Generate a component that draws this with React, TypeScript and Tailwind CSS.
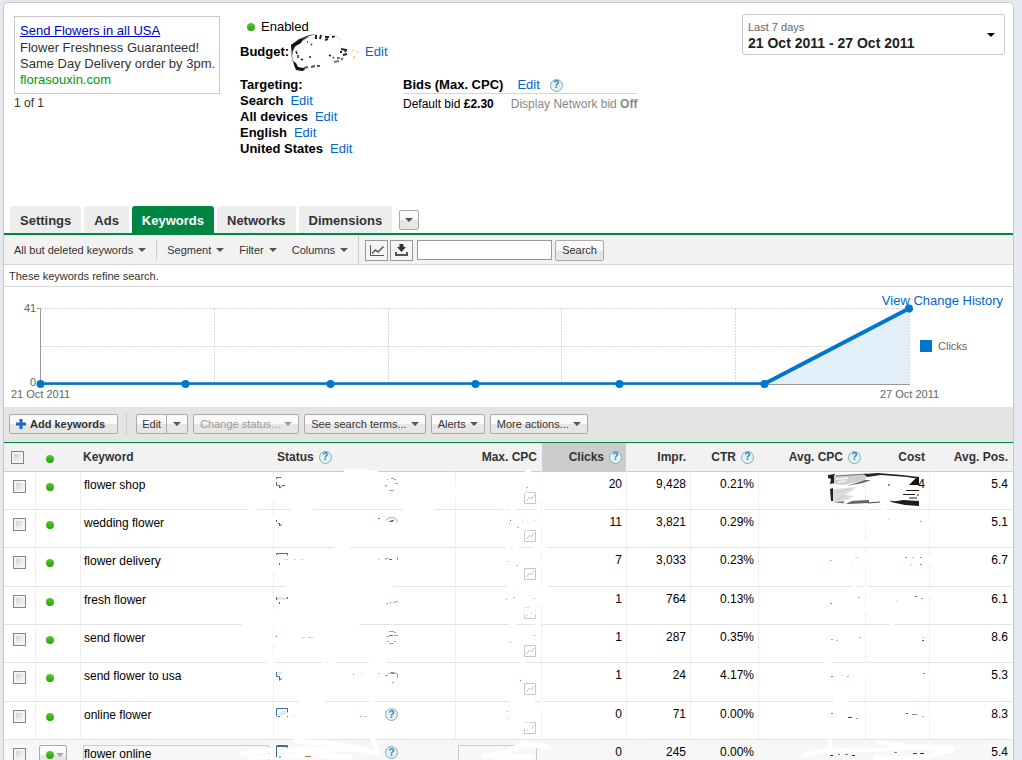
import { ReactNode, useState } from "react";
import { clsx } from "clsx";

type KeywordRow = {
  keyword: string;
  clicks: string;
  impressions: string;
  ctr: string;
  cost?: string;
  position: string;
  showStatus?: boolean;
};

const rows: KeywordRow[] = [
  { keyword: "flower shop", clicks: "20", impressions: "9,428", ctr: "0.21%", cost: "4", position: "5.4" },
  { keyword: "wedding flower", clicks: "11", impressions: "3,821", ctr: "0.29%", position: "5.1" },
  { keyword: "flower delivery", clicks: "7", impressions: "3,033", ctr: "0.23%", position: "6.7" },
  { keyword: "fresh flower", clicks: "1", impressions: "764", ctr: "0.13%", position: "6.1" },
  { keyword: "send flower", clicks: "1", impressions: "287", ctr: "0.35%", position: "8.6" },
  { keyword: "send flower to usa", clicks: "1", impressions: "24", ctr: "4.17%", position: "5.3" },
  { keyword: "online flower", clicks: "0", impressions: "71", ctr: "0.00%", position: "8.3", showStatus: true },
  { keyword: "flower online", clicks: "0", impressions: "245", ctr: "0.00%", position: "5.4", showStatus: true },
];

const tabs = ["Settings", "Ads", "Keywords", "Networks", "Dimensions"];
const targeting = ["Search", "All devices", "English", "United States"];

function Caret({ className = "text-[#555]" }: { className?: string }) {
  return (
    <svg className={clsx("h-1 w-2 shrink-0", className)} viewBox="0 0 8 4" fill="currentColor" aria-hidden="true">
      <path d="M0 0h8L4 4z" />
    </svg>
  );
}

function Help() {
  return (
    <span className="inline-flex size-[13px] shrink-0 items-center justify-center rounded-full border border-[#86adb4] bg-[#dff2f6] text-[10px] leading-none font-bold text-[#3f7cb0]">
      ?
    </span>
  );
}

function Dot() {
  return <span className="block size-2 shrink-0 rounded-full bg-linear-to-b from-[#55c92c] to-[#25a00d]" />;
}

function Checkbox({ label }: { label: string }) {
  return (
    <input
      type="checkbox"
      aria-label={label}
      className="block size-[13px] appearance-none border border-[#858585] bg-linear-to-br from-[#c4c9d1] to-white shadow-[inset_0_0_0_2px_#f4f4f4] checked:from-[#4a78b5]"
    />
  );
}

function EditLink() {
  return <a href="#edit" className="text-[#06c]">Edit</a>;
}

function GrayButton({ children, className, disabled, label }: { children: ReactNode; className?: string; disabled?: boolean; label?: string }) {
  return (
    <button
      type="button"
      disabled={disabled}
      aria-label={label}
      className={clsx(
        "flex h-5 items-center rounded-[2px] border border-[#aaa] bg-linear-to-b from-[#fafafa] from-50% to-[#e6e6e6] to-50% text-[11px]",
        disabled ? "text-[#999]" : "text-[#333]",
        className,
      )}
    >
      {children}
    </button>
  );
}

function BudgetScribble() {
  return (
    <svg className="h-4 w-[76px] overflow-visible" viewBox="289 43 76 16" aria-hidden="true">
      <path d="M318 33l-9 1-10 4-8 6 1 12 1-6 3-6 6-4 5-3 2-2z" fill="#444" />
      <path d="M291 44l9-6h3l-2 4-7 4-2 5z" fill="#151515" />
      <path d="M291 50l2 11" stroke="#999" />
      <path d="M293 60l3 2 2 4 6 1 1 2-3 1-6-1-2-5z" fill="#151515" />
      <path d="M304 67l4-1M311 66l4-1M317 65l3 0" stroke="#555" strokeWidth="2" />
      <path d="M316 34v4M321 34l-1 4M325 36h4M332 36l3-1M328 38l-3 1" stroke="#222" strokeWidth="2" />
      <path d="M330 33l8 3 3 4" stroke="#e2e2e2" fill="none" />
      <path d="M311 43l1 1M307 41h1M298 54v3M296 50l1 3M309 56h2M329 54l2 1M333 56l1 1M301 58l2 1" stroke="#222" strokeWidth="1.500" />
      <path d="M341 48l5 1-1 2M343 54l4-1M340 51h2" stroke="#222" strokeWidth="2" fill="none" />
      <path d="M334 61l5-1M341 59l2-2M337 57h3" stroke="#777" strokeWidth="2" />
      <path d="M352 49l1 1M353 58l2-3" stroke="#eab37c" />
      <path d="M357 50l1 2" stroke="#93bfe8" />
    </svg>
  );
}

function CampaignSummary() {
  return (
    <section className="flex px-[10px] pr-2 pb-[49px] text-[13px] leading-4">
      <div className="w-[226px] shrink-0 pt-[13px] text-[#333]">
        <div className="w-[206px] border border-[#c8c8c8] px-[5px] pt-[6px] pb-[5px] whitespace-nowrap">
          <a href="#ad" className="mb-px block text-[#00c] underline">Send Flowers in all USA</a>
          <p>Flower Freshness Guaranteed!</p>
          <p>Same Day Delivery order by 3pm.</p>
          <p className="text-[#090]">florasouxin.com</p>
        </div>
        <p className="mt-px text-xs">1 of 1</p>
      </div>

      <div className="w-[163px] shrink-0 pt-4 text-black">
        <div className="flex items-center gap-[6px] pl-[7px]">
          <Dot />
          Enabled
        </div>
        <div className="mt-[9px] flex">
          <b>Budget:</b>
          <BudgetScribble />
          <EditLink />
        </div>
        <div className="mt-[17px]">
          <b>Targeting:</b>
          {targeting.map((item) => (
            <div key={item} className="flex gap-[7px] whitespace-nowrap">
              <b>{item}</b>
              <EditLink />
            </div>
          ))}
        </div>
      </div>

      <div className="shrink-0 pt-[74px] text-black">
        <div className="flex items-center border-b border-[#d5d5d5]">
          <b className="mr-[14px]">Bids (Max. CPC)</b>
          <EditLink />
          <span className="ml-[10px] flex"><Help /></span>
        </div>
        <div className="mt-[2px] flex gap-[17px] text-xs leading-4">
          <span>Default bid <b>£2.30</b></span>
          <span className="text-[#888]">Display Network bid <b>Off</b></span>
        </div>
      </div>

      <button
        type="button"
        className="mt-[11px] ml-auto flex h-[41px] w-[263px] items-center justify-between rounded-[3px] border border-[#c8c8c8] px-[5px] pr-[9px] text-left"
      >
        <span>
          <span className="block text-[11px] leading-4 text-[#666]">Last 7 days</span>
          <b className="block text-sm leading-4 text-[#222]">21 Oct 2011 - 27 Oct 2011</b>
        </span>
        <Caret className="text-black" />
      </button>
    </section>
  );
}

function TabBar() {
  const [active, setActive] = useState("Keywords");

  return (
    <nav className="flex items-end gap-[3px] border-b-2 border-[#008542] pl-[6px]">
      {tabs.map((tab) => (
        <button
          key={tab}
          type="button"
          onClick={() => setActive(tab)}
          className={clsx(
            "h-[27px] rounded-t-[3px] px-[10px] pt-[2px] text-[13px] font-bold",
            active === tab ? "bg-[#008542] text-white" : "bg-[#ededed] text-[#333]",
          )}
        >
          {tab}
        </button>
      ))}
      <GrayButton label="More tabs" className="mb-[3px] ml-1 w-5 justify-center">
        <Caret />
      </GrayButton>
    </nav>
  );
}

function MenuButton({ children }: { children: ReactNode }) {
  return (
    <button type="button" className="flex items-center gap-[5px] pt-px whitespace-nowrap text-[#333]">
      {children}
      <Caret />
    </button>
  );
}

function FilterBar() {
  const iconButton = "flex h-[21px] w-[23px] items-center justify-center border border-[#999] bg-[#f5f5f5]";

  return (
    <div className="flex h-[30px] items-center border-b border-[#d8d8d8] bg-[#f2f2f2] pl-[10px] text-[11px]">
      <MenuButton>All but deleted keywords</MenuButton>
      <span className="mx-[10px] h-5 w-px bg-[#ccc]" />
      <div className="flex gap-[15px]">
        <MenuButton>Segment</MenuButton>
        <MenuButton>Filter</MenuButton>
        <MenuButton>Columns</MenuButton>
      </div>
      <span className="mr-[6px] ml-[10px] w-px self-stretch bg-[#ccc]" />
      <div className="flex items-center gap-[2px] pt-px">
        <button type="button" aria-label="Toggle chart" className={iconButton}>
          <svg width="16" height="13" viewBox="0 0 16 13" fill="none" stroke="#555" aria-hidden="true">
            <path d="M1.5 1v10.500H15" />
            <path d="M3 9.500l3.500-3.500 2.500 2L14.500 2.500" strokeWidth="1.500" />
          </svg>
        </button>
        <button type="button" aria-label="Download" className={iconButton}>
          <svg width="15" height="13" viewBox="0 0 15 13" fill="#333" aria-hidden="true">
            <path d="M5.500 0h4v3H12L7.500 8 3 3h2.500z" />
            <path d="M1 8h2v2h9V8h2v4H1z" fill="#555" />
          </svg>
        </button>
        <input type="text" aria-label="Search keywords" className="ml-[2px] h-5 w-[135px] border border-[#999] bg-white px-1" />
        <GrayButton className="ml-px h-[21px] px-[6px]">Search</GrayButton>
      </div>
    </div>
  );
}

const chartPoints = [40, 185, 330, 475, 619, 764];

function ClicksChart() {
  return (
    <div className="relative">
      <svg className="block w-full" viewBox="4 287 1009 120" role="img" aria-label="Clicks per day" fontSize="11" fill="#666">
        <path d="M764 384L909 308.500V384z" fill="#e4f0f9" />
        <path d="M41 308.500H909M41 346.500H835M214.500 309V384M388.500 309V384M561.500 309V384M735.500 309V384M909.500 309V384" stroke="#d8d8d8" strokeDasharray="2 1" />
        <path d="M37 308.500h3.500V384M37 384.500H910" stroke="#999" fill="none" />
        <path d="M40 383.500H764" stroke="#0077cc" strokeWidth="2.500" fill="none" />
        <path d="M764 384L909 308.500" stroke="#0077cc" strokeWidth="4" />
        <text x="24" y="312">41</text>
        <text x="30" y="386">0</text>
        <text x="11" y="398">21 Oct 2011</text>
        <text x="880" y="398">27 Oct 2011</text>
        {chartPoints.map((x) => (
          <circle key={x} cx={x + 0.5} cy="384" r="4" fill="#0077cc" />
        ))}
        <circle cx="909" cy="308.500" r="4" fill="#0077cc" />
        <path d="M920 340h12v12h-12z" fill="#0077cc" />
        <text x="938" y="350">Clicks</text>
      </svg>
      <a href="#history" className="absolute top-[6px] right-[10px] text-[13px] leading-4 text-[#06c]">
        View Change History
      </a>
    </div>
  );
}

function ActionBar() {
  return (
    <div className="flex h-9 items-center gap-[5px] border-b border-[#008542] bg-[#e4e4e4] pb-px pl-[5px]">
      <GrayButton className="gap-1 pr-3 pl-[6px] text-xs font-bold">
        <svg width="10" height="10" viewBox="0 0 10 10" aria-hidden="true">
          <path d="M3.500 0h3v3.500H10v3H6.500V10h-3V6.500H0v-3h3.500z" fill="#1c67c4" />
        </svg>
        Add keywords
      </GrayButton>
      <span className="mx-[3px] h-[22px] w-px bg-[#ccc]" />
      <div className="ml-px flex">
        <GrayButton className="rounded-r-none px-[5px]">Edit</GrayButton>
        <GrayButton label="More edit options" className="-ml-px w-[22px] justify-center rounded-l-none">
          <Caret />
        </GrayButton>
      </div>
      <GrayButton disabled className="gap-1 px-[6px]">Change status...<Caret className="text-[#999]" /></GrayButton>
      <GrayButton className="gap-1 px-[6px]">See search terms...<Caret /></GrayButton>
      <GrayButton className="gap-1 px-[6px]">Alerts<Caret /></GrayButton>
      <GrayButton className="gap-1 px-[6px]">More actions...<Caret /></GrayButton>
    </div>
  );
}

function SparkIcon() {
  return (
    <svg className="ml-auto block" width="12" height="12" viewBox="0 0 12 12" fill="none" stroke="#c6c6c6" aria-label="Bid simulator">
      <path d="M.5.500h11v11H.5z" />
      <path d="M2.500 9l3-4 2 2 2.500-4" />
    </svg>
  );
}

function BubbleIcon() {
  return (
    <svg width="13" height="13" viewBox="0 0 13 13" aria-hidden="true">
      <path d="M1 6l9-4v4l-5 2z" fill="#e8e8e8" />
      <path d="M.5 8.500V.500h11v4" stroke="#3a6ea5" fill="none" />
      <path d="M2 8.500h2M11 8.500h1" stroke="#3a6ea5" />
    </svg>
  );
}

// [x, y, width, colour] of the specks left around the painted-out figures
const specks: [number, number, number, string][] = [
  [378, 518, 2, "#c33"], [284, 559, 4, "#e6c8d0"], [294, 559, 2, "#e0b5c0"], [301, 559, 2, "#e0b5c0"],
  [378, 559, 2, "#ccc"], [302, 637, 3, "#dbb"], [308, 637, 5, "#e0b5c0"], [353, 674, 1, "#c33"],
  [361, 673, 1, "#e8c9a0"], [378, 673, 2, "#bbb"], [360, 716, 2, "#d99"], [364, 716, 3, "#cbb"],
  [293, 716, 2, "#ddd"], [510, 520, 1, "#536"], [509, 523, 1, "#9bd"],
  [517, 527, 2, "#aaa"], [522, 520, 1, "#ec9"], [534, 520, 1, "#8bd"], [508, 561, 1, "#999"],
  [516, 565, 2, "#aaa"], [506, 599, 1, "#999"], [513, 597, 2, "#aaa"], [534, 598, 1, "#999"],
  [510, 642, 1, "#777"], [534, 635, 1, "#777"], [520, 680, 1, "#747"], [507, 711, 1, "#a95"],
  [508, 718, 1, "#aaa"], [835, 519, 1, "#edb"], [888, 519, 1, "#dc6"], [920, 521, 2, "#988"],
  [830, 560, 2, "#c96"], [855, 557, 4, "#bde"], [852, 564, 1, "#adf"], [905, 557, 2, "#28c"],
  [912, 557, 2, "#da6"], [920, 557, 2, "#975"], [910, 564, 2, "#9de"], [920, 564, 2, "#28c"],
  [830, 603, 2, "#863"], [858, 597, 2, "#6ab"], [915, 596, 2, "#444"], [921, 598, 2, "#966"],
  [896, 600, 1, "#ccc"], [831, 639, 2, "#79a"], [836, 640, 2, "#9bd"], [859, 637, 2, "#7ab"],
  [923, 637, 1, "#28c"], [922, 640, 2, "#333"], [831, 676, 2, "#369"], [842, 675, 1, "#9bc"],
  [847, 676, 2, "#b96"], [923, 673, 2, "#558"], [831, 713, 2, "#555"], [848, 717, 4, "#111"],
  [856, 718, 2, "#a76"], [906, 713, 2, "#333"], [912, 714, 5, "#864"], [922, 716, 2, "#69a"],
];

const highlightedSpecks: [number, number, number, string][] = [
  [830, 755, 3, "#333"], [838, 754, 2, "#777"], [845, 754, 3, "#a75"], [852, 755, 3, "#333"],
  [894, 752, 3, "#988"], [913, 753, 4, "#445"], [920, 753, 4, "#333"], [305, 756, 6, "#c66"],
];

function PaintOver() {
  return (
    <svg className="pointer-events-none absolute top-0 left-0 w-full" viewBox="4 443 1009 317" fill="none" aria-hidden="true">
      {/* brush gaps in the row and column rules */}
      <g stroke="#fff" strokeWidth="3" strokeLinecap="round">
        <path d="M250 509.500h6M292 509.500h20M404 509.500h29M504 509.500h2M512 509.500h2M538 509.500h5M882 509.500h3" />
        <path d="M336 547.500h13M507 547.500h3M514 547.500h4M533 547.500h12" />
        <path d="M287 586.500h105M508 586.500h6M518 586.500h22M540 586.500h7M854 586.500h2" />
        <path d="M243 624.500h115M511 624.500h4M536 624.500h4M891 624.500h3" />
        <path d="M268 662.500h6M323 662.500h2M330 662.500h4M370 662.500h15M521 662.500h3M825 662.500h5" />
        <path d="M300 701.500h24M371 701.500h3M511 701.500h22M835 701.500h12" />
        <path d="M273.500 475v7M273.500 490v9M273.500 518v8M273.500 562v8M273.500 598v3M273.500 611v14M273.500 630v12M273.500 655v14" />
        <path d="M455.500 488v8M541.500 475v11M541.500 492v7M541.500 516v10M541.500 548v5M541.500 562v3M541.500 590v13M541.500 646v4M541.500 686v4M541.500 702v6" />
        <path d="M865.500 510v14M865.500 541v4M865.500 554v12M865.500 587v4M865.500 607v4M865.500 630v3M865.500 664v14M865.500 708v3M929.500 520v5M929.500 557v6M929.500 591v4M929.500 672v6M929.500 712v4" />
      </g>
      <path d="M344 471.500c12-2 24 0 34 1M525 472l6-2" stroke="#fff" strokeWidth="3" />
      {/* simulator icons that are half covered */}
      <path d="M523 492h5M526 495h4M522 530h3M526 529h3M522 609h7v4h-7zM532 608h5v5h-4zM524 724h6v4h-4z" stroke="#fff" strokeWidth="3" />
      <path d="M526 488l2-1M526 492h1" stroke="#aaa" />

      <g stroke="#3a6ea5">
        <path d="M276.500 479v-1.500h5M276.500 482v3.500h2M279.500 485v3M280 487.500h1M281 486.500h1M282 485.500h3M276.500 520v2M278 523.500h1M279.500 523v3M280 525.500h1M281 524.500h1M276.500 555v-1.500h11v2M279.500 563v2M276.500 597v3M287.500 597v2M279.500 602v2M276.500 636v1M276.500 672v4.500h3v4M280 679.500h1M281 678.500h1" />
      </g>
      <path d="M277 598.500h10M278 673.500l4-1" stroke="#ddd" strokeWidth="2" />
      <g stroke="#86adb4">
        <path d="M387 479.500h1M391 478.500h3M394 479.500h2M395 483.500h3M385.500 487v-1.500h2M389 490.500h5" />
        <path d="M386 520.500c2-4 9-4 11 0v2M385.500 560v-1.500h3M397.500 560v-3M386 603.500h2M393 602.500h2M395 601.500h3" />
        <path d="M389 631.500h5M394 632.500h2M387 636.500h2M394 635.500h4M387 641.500h2M389 643.500h5M394 641.500h2M385 675.500h3M388 673.500h2M390 672.500h5M395 673.500h2M397.500 674v4M392 682.500h2" />
      </g>
      <path d="M389 521.500h4M391 520.500h3M389 559.500h3M390 602.500h1M389 635.500h4M391 673.500h3" stroke="#3f7cb0" />

      {specks.map(([x, y, width, color]) => (
        <rect key={`${x}-${y}`} x={x} y={y} width={width} height="1" fill={color} fillOpacity="0.8" />
      ))}

      {/* crossed-out cost of the first keyword */}
      <path d="M828 475l7-1v9l-5 1 1-5-3-1z" fill="#222" />
      <path d="M834 475l32-1v6l-22 5-10-1z" fill="#cfcfcf" />
      <path d="M836 479l12-1M838 482l8-1" stroke="#eee" strokeWidth="2" />
      <path d="M836 476l30-2" stroke="#777" />
      <path d="M864 474l14-1 24 2 17 2v2l-12-2-26-2-14 2z" fill="#222" />
      <path d="M871 480l-8 3-16 3 18-6z" fill="#666" />
      <path d="M909 485l6-6 4-2v8z" fill="#111" />
      <path d="M888 485h2M906 490.500h13M903 494.500h12M917 495h2M909 498h8" stroke="#222" />
      <path d="M830 489l3-1 0 13-2 0z" fill="#222" />
      <path d="M833 489l24-2-12 8 9 1-7 4-14 2z" fill="#dcdcdc" />
      <path d="M836 499l10-3M835 493l14-4" stroke="#ccc" />
      <path d="M833 502l16-1 20-1v3l-20 1z" fill="#666" />
      <path d="M868 503l12-1M890 501l12 2" stroke="#444" />
      <path d="M903 500l16 1v5l-14-1-14-3z" fill="#1c1c1c" />
      <path d="M844 503l16-7" stroke="#fff" strokeWidth="3" />

      {/* smears on the highlighted row */}
      <g stroke="#fff" strokeLinecap="round">
        <path d="M242 754c20-5 60-5 90-2M250 758c30-3 70-2 100-1M295 741c15 2 30 0 50 5l30 7M300 749h65M373 740l5 12" strokeWidth="5" />
        <path d="M484 756l28-5 12-8M493 757h40M510 750c12-6 30-5 37-3M522 743l18 3" strokeWidth="5" />
        <path d="M803 755l25-5h50c30-4 50-3 76-2M830 741v12M880 742l26 4 48 4-34 8M875 758h45" strokeWidth="4" />
      </g>
      {highlightedSpecks.map(([x, y, width, color]) => (
        <rect key={x} x={x} y={y} width={width} height="1" fill={color} />
      ))}
      <path d="M276.500 757v-11.500h11v2M279 757h2" stroke="#3a6ea5" />
    </svg>
  );
}

function HeaderCell({ children, help, className }: { children: ReactNode; help?: boolean; className?: string }) {
  return (
    <th className={clsx("border-r border-b border-r-transparent border-b-[#ccc] pr-1 align-middle font-bold", className)}>
      <span className="inline-flex items-center gap-[5px] align-middle">
        {children}
        {help && <Help />}
      </span>
    </th>
  );
}

function KeywordTable() {
  return (
    <div className="relative">
      <table className="w-full table-fixed border-separate border-spacing-0 text-right text-xs leading-4 whitespace-nowrap">
        <colgroup>
          <col className="w-8" />
          <col className="w-[45px]" />
          <col />
          <col className="w-[182px]" />
          <col className="w-[86px]" />
          <col className="w-[85px]" />
          <col className="w-16" />
          <col className="w-[68px]" />
          <col className="w-[107px]" />
          <col className="w-16" />
          <col className="w-[83px]" />
        </colgroup>
        <thead className="bg-[#f2f2f2] text-[#333]">
          <tr className="h-[29px]">
            <th className="border-b border-[#ccc] pl-[7px]"><Checkbox label="Select all keywords" /></th>
            <th className="border-b border-[#ccc] pt-1 pl-[10px]"><Dot /></th>
            <HeaderCell className="pl-[2px] text-left">Keyword</HeaderCell>
            <HeaderCell help className="pl-[3px] text-left">Status</HeaderCell>
            <HeaderCell>Max. CPC</HeaderCell>
            <HeaderCell help className="bg-[#ccc] bg-clip-padding">Clicks</HeaderCell>
            <HeaderCell>Impr.</HeaderCell>
            <HeaderCell help>CTR</HeaderCell>
            <HeaderCell help>Avg. CPC</HeaderCell>
            <HeaderCell>Cost</HeaderCell>
            <HeaderCell>Avg. Pos.</HeaderCell>
          </tr>
        </thead>
        <tbody className="text-black">
          {rows.map((row, index) => {
            const hovered = index === rows.length - 1;
            const cell = clsx(
              "border-r border-b border-b-[#e4e4e4] pt-1 pr-1 align-top last:border-r-transparent",
              hovered ? "border-r-transparent" : "border-r-[#efefef]",
            );

            return (
              <tr key={row.keyword} className={clsx("h-[38px] nth-[3n]:h-[39px]", hovered && "bg-[#f7f7f7]")}>
                <td className={clsx(cell, "pl-[9px]")}>
                  <div className="pt-1"><Checkbox label={`Select ${row.keyword}`} /></div>
                </td>
                <td className={cell}>
                  {hovered ? (
                    <GrayButton label="Change status" className="mt-px ml-[3px] w-7 gap-[2px] pl-[6px]">
                      <Dot />
                      <Caret className="text-[#aaa]" />
                    </GrayButton>
                  ) : (
                    <div className="pt-[7px] pl-[10px]"><Dot /></div>
                  )}
                </td>
                <td className={clsx(cell, "text-left", hovered ? "pl-[2px]" : "pl-[3px]")}>
                  {hovered ? (
                    <div className="mt-px h-5 border border-[#ccc]">{row.keyword}</div>
                  ) : (
                    <div className="pt-px">{row.keyword}</div>
                  )}
                </td>
                <td className={clsx(cell, "pl-[2px]")}>
                  {row.showStatus && (
                    <div className="flex gap-24 pt-[2px]">
                      <BubbleIcon />
                      <Help />
                    </div>
                  )}
                </td>
                <td className={cell}>
                  {hovered ? (
                    <div className="mt-px ml-[2px] h-5 border border-[#ccc]" />
                  ) : (
                    <div className="pt-4 pr-px"><SparkIcon /></div>
                  )}
                </td>
                <td className={cell}>{row.clicks}</td>
                <td className={cell}>{row.impressions}</td>
                <td className={cell}>{row.ctr}</td>
                <td className={cell} />
                <td className={cell}>{row.cost}</td>
                <td className={cell}>{row.position}</td>
              </tr>
            );
          })}
        </tbody>
      </table>
      <PaintOver />
    </div>
  );
}

export default function App() {
  return (
    <div className="h-screen overflow-hidden bg-[#e6e9f0] pt-[2px] pr-2 pl-[3px] font-['Liberation_Sans',Arial,sans-serif]">
      <main className="min-h-full rounded-t-[5px] border border-[#c8c8c8] bg-white">
        <CampaignSummary />
        <TabBar />
        <FilterBar />
        <p className="border-b border-[#d8d8d8] px-[5px] pt-[3px] pb-[2px] text-[11px] leading-4 text-[#333]">
          These keywords refine search.
        </p>
        <ClicksChart />
        <ActionBar />
        <KeywordTable />
      </main>
    </div>
  );
}
